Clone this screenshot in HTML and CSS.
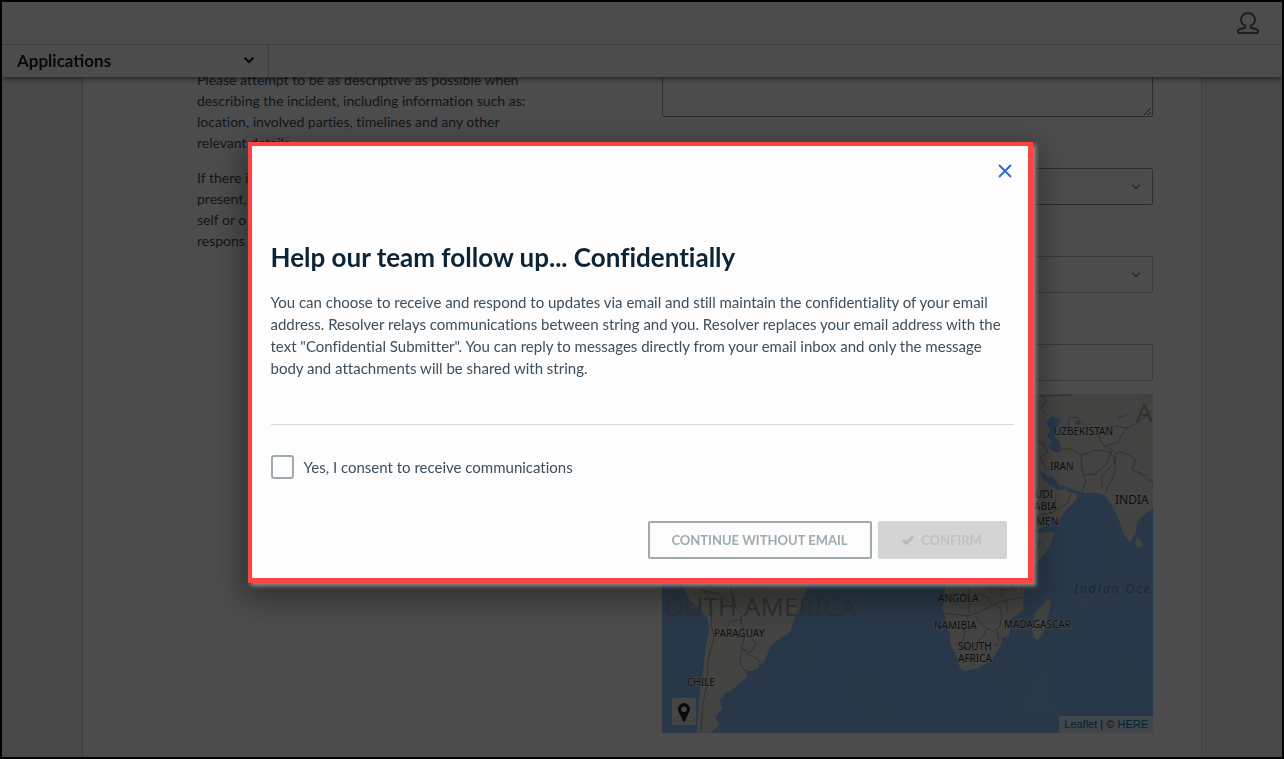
FILE: index.html
```
<!DOCTYPE html>
<html lang="en">

<head>
    <meta charset="UTF-8">
    <meta name="viewport" content="width=device-width, initial-scale=1.0">
    <title>Applications</title>
    <link rel="stylesheet" href="styles.css">
</head>

<body>
    <header class="header">
        <div class="top-bar">
            <button type="button" class="user-btn" aria-label="Account">
                <svg width="22" height="22" viewBox="0 0 22 22" fill="none" stroke="#5b6b7a" stroke-width="2" stroke-linejoin="round">
                    <path d="M8.500 14C5 12 4 9.800 4 7.500a7 6.500 0 0 1 14 0c0 2.300-1 4.500-4.500 6.500v1.500l6.500 2c.8.300 1 .8 1 1.500v2H1v-2c0-.7.200-1.200 1-1.500l6.500-2z" />
                </svg>
            </button>
        </div>
        <nav class="nav-bar">
            <button type="button" class="app-menu">
                <span>Applications</span>
                <svg width="12" height="8" viewBox="0 0 12 8" fill="none" stroke="#0d2436" stroke-width="2">
                    <path d="M1.500 1.500L6 6l4.500-4.500" />
                </svg>
            </button>
        </nav>
    </header>

    <main class="page">
        <div class="panel">
            <div class="help-text">
                <p>Please attempt to be as descriptive as possible when<br>
                    describing the incident, including information such as:<br>
                    location, involved parties, timelines and any other<br>
                    relevant details.</p>
                <p>If there i<br>present,<br>self or o<br>respons</p>
            </div>
            <form class="fields">
                <textarea class="field field-area" aria-label="Description"></textarea>
                <div class="select-wrap">
                    <select class="field field-dark" aria-label="Category"></select>
                    <svg width="8" height="6" viewBox="0 0 8 6" fill="none" stroke="#707a82" stroke-width="1.500">
                        <path d="M.5 1L4 4.500 7.500 1" />
                    </svg>
                </div>
                <div class="select-wrap">
                    <select class="field" aria-label="Type"></select>
                    <svg width="8" height="6" viewBox="0 0 8 6" fill="none" stroke="#707a82" stroke-width="1.500">
                        <path d="M.5 1L4 4.500 7.500 1" />
                    </svg>
                </div>
                <div class="location">
                    <input type="text" class="field" aria-label="Location">
                    <div class="map">
                        <svg class="map-svg" viewBox="662 394 491 339" preserveAspectRatio="xMidYMid slice">
                            <rect class="water" x="662" y="394" width="491" height="339" />
                            <!-- sea floor -->
                            <g class="ridge">
                                <path d="M803 653l8-1 4 4-9 3zM857 672l4 14 5 18 12 20 6-4-11-16-8-26z" />
                                <path d="M1015 712l12-18 16-32 5-30 4 2-5 34 10 44zM1130 660l8 14-4 16 12 12-4 3-14-12 2-18-4-12z" />
                                <path d="M1080 600l14-6-10 18-12 14zM1008 660l3 12-2 16-4-14zM1110 560l8-40 4 2-4 42z" />
                            </g>
                            <!-- south america -->
                            <path class="land" d="M676 570l7 16 6 14 11 8 8 12 1 12-4 18-1 15-4 25-2 25-1 18h14l9-9-5-7 7-8-2-9 7-8 5-2 6-6 9-7-1-5 11-3 8-9 6-15 10-7 9-6 3-10 7-15 6-17 4-10z" />
                            <path class="green" d="M690 586l60 0 20 8-8 16-20-6-10 10-20-12-12 4z" />
                            <path class="border" d="M700 586l8 10 4 14-1 14 3 14-6 22-1 22-4 22-2 24v8M702 590l16 4 16 12 8 8-1 10M727 628l4-7 9-1 3 6v9l8 2 5 7-5 8-10-4 4-12M742 648l-2 14 4 8 8 3 8-5-2-9-12-6-4-6M730 586l6 22 6 6" />
                            <!-- africa -->
                            <path class="land" d="M945 570v30l-3 7 7 21 2 17 5 10 4 13 5 3 13-3 14-8 9-15 1-7 7-2 1-6-3-8 16-12 1-14-2-26z" />
                            <path class="land" d="M1020 533h16l18-1-3 13-10 13-9 9-12 8z" />
                            <path class="green" d="M948 586h52l8 8-16 12-30 4-16-8z" />
                            <path class="border" d="M943 613l24 3 10-3 12-6 8-4 10-3 12-2 6-1M969 586v27M968 616l-3 12-2 14-2 8 14-6 8-8 5-8M975 616l8 10 10 5 7-4 2-14-6-10M997 629l2 12-4 5 4-1M1003 586l-2 10 6 6 0 10M980 594l8 4 3 6" />
                            <path class="land" d="M1048 598l3 4-2 10-5 20-6 8-5-3-1-9 3-16 8-7z" />
                            <path class="green" d="M1047 600l3 3-4 13-4-2z" />
                            <!-- asia -->
                            <path class="land" d="M1020 394h133v114l-6 5-10 9-1 10-6 11-6-8-5-15-5-11-9-13-7-3h-13l-15-4-8-3-10-1-6-10-6-4 3 8 7 7 9 4 6-3 4 5 8 2-1 6-10 10-7 10-17 8-24 8z" />
                            <path class="land" d="M1137 537l4 4 1 5-4 2-3-3z" />
                            <path class="water" d="M1052 416l-6 6 4 7-3 7 5 5-4 6 6 5h7l-1-9-5-6 2-10 4-7zM1046 476l5 9 8 5 10-2-10-3-6-8zM1074 420l6 1v4l-5-1zM1117 417l15-3-14 5z" />
                            <path class="green" d="M1140 394h13v12l-8-2z" />
                            <path class="border" d="M1040 394l6 6-5 8 6 7M1040 396l32-1M1036 440l8 4 4 8-8 5 6 12M1061 449l10 0 10 6 1 14 4 12-4 10M1067 430l2-12 8-1 9 11 13 9 5 9 13-3 9-14 14-8 13-12M1082 455l14-5 15 2-4 12-12 10-12 1M1111 452l4 10-13 13 0 12M1104 445l12 8 8-1 12 8-4 10 16 6 5 8M1116 453l-2 22-9 18M1136 471l10 8 7 4M1056 498l-2 14-16 4M1071 494l-4 10-12 6M1034 544l7-3-4 9M1100 428l14-2 14 2" />
                            <g class="label">
                                <text x="1054" y="435">UZBEKISTAN</text>
                                <text x="1050" y="470">IRAN</text>
                                <text x="1035" y="498">UDI</text>
                                <text x="1034" y="510">ABIA</text>
                                <text x="1036" y="525">MEN</text>
                                <text x="1115" y="504" class="label-md">INDIA</text>
                                <text x="984" y="590" class="label-faint">TANZANIA</text>
                                <text x="938" y="602">ANGOLA</text>
                                <text x="934" y="629">NAMIBIA</text>
                                <text x="1004" y="628">MADAGASCAR</text>
                                <text x="958" y="650">SOUTH</text>
                                <text x="958" y="662">AFRICA</text>
                                <text x="714" y="637">PARAGUAY</text>
                                <text x="687" y="686">CHILE</text>
                            </g>
                            <text x="664" y="616" class="continent">OUTH AMERICA</text>
                            <text x="1136" y="422" class="continent">A</text>
                            <text x="1074" y="593" class="ocean">Indian Oce</text>
                        </svg>
                        <button type="button" class="pin-btn" aria-label="Pick location">
                            <svg width="14" height="20" viewBox="0 0 14 20" fill="#1e2a33" fill-rule="evenodd">
                                <path d="M7 1a6 6 0 0 1 6 6c0 3.500-3 6-4.500 11.500-.4 1.300-2.600 1.300-3 0C4 13 1 10.500 1 7a6 6 0 0 1 6-6zm0 3.500a2.800 2.800 0 1 0 0 5.600 2.800 2.800 0 0 0 0-5.600z" />
                            </svg>
                        </button>
                        <div class="attribution"><a href="#">Leaflet</a> | © <a href="#">HERE</a></div>
                    </div>
                </div>
            </form>
        </div>
    </main>

    <div class="overlay">
        <div class="modal" role="dialog" aria-modal="true" aria-labelledby="modal-title">
            <button type="button" class="close-btn" aria-label="Close">
                <svg width="14" height="14" viewBox="0 0 14 14" fill="none" stroke="#2a6cd0" stroke-width="2">
                    <path d="M1 1l12 12M13 1L1 13" />
                </svg>
            </button>
            <h2 class="modal-title" id="modal-title">Help our team follow up... Confidentially</h2>
            <p class="modal-text">You can choose to receive and respond to updates via email and still maintain the confidentiality of your email<br>
                address. Resolver relays communications between string and you. Resolver replaces your email address with the<br>
                text "Confidential Submitter". You can reply to messages directly from your email inbox and only the message<br>
                body and attachments will be shared with string.</p>
            <label class="consent">
                <input type="checkbox" name="consent">
                <span>Yes, I consent to receive communications</span>
            </label>
            <div class="actions">
                <button type="button" class="btn btn-outline">CONTINUE WITHOUT EMAIL</button>
                <button type="button" class="btn btn-confirm" disabled>
                    <svg width="12" height="10" viewBox="0 0 12 10" fill="none" stroke="#b4bcc1" stroke-width="3">
                        <path d="M1 5l3.500 3.200L11 1.500" />
                    </svg>
                    CONFIRM
                </button>
            </div>
        </div>
    </div>
</body>

</html>
```

FILE: styles.css
```
* {
    margin: 0;
    padding: 0;
    box-sizing: border-box;
}

body {
    height: 100vh;
    overflow: hidden;
    border: 2px solid #000;
    background-color: #f0f0f0;
    font-family: Lato, "Liberation Sans", sans-serif;
    font-size: 14px;
    font-variant-ligatures: none;
    color: #3c4f5e;
}

button {
    font-family: inherit;
    background: none;
    border: none;
    cursor: pointer;
}

/* header */
.header {
    position: fixed;
    top: 2px;
    left: 2px;
    right: 2px;
    z-index: 1;
    background-color: #fff;
    box-shadow: 0 2px 5px rgba(0, 0, 0, .5);
}

.top-bar {
    display: flex;
    justify-content: flex-end;
    align-items: center;
    height: 43px;
    padding-right: 23px;
    border-bottom: 1px solid #d0d0d0;
}

.user-btn svg,
.close-btn svg,
.pin-btn svg {
    display: block;
}

.nav-bar {
    height: 32px;
}

.app-menu {
    display: flex;
    justify-content: space-between;
    align-items: center;
    width: 267px;
    height: 100%;
    padding: 0 13px 2px 15px;
    border-right: 1px solid #d0d0d0;
    font-size: 17px;
    font-weight: 700;
    color: #0d2436;
}

/* form */
.page {
    display: flex;
    justify-content: center;
    height: 100%;
}

.panel {
    display: flex;
    justify-content: space-between;
    width: 1120px;
    padding: 43px 48px 24px 114px;
    background-color: #fff;
    border: 1px solid #d4d4d4;
    border-width: 0 1px;
}

.help-text {
    padding-top: 24px;
    line-height: 21px;
}

.help-text p {
    margin-bottom: 14px;
}

.fields {
    display: flex;
    flex-direction: column;
    gap: 51px;
    width: 491px;
}

.field {
    display: block;
    width: 100%;
    height: 37px;
    background-color: #fff;
    border: 1px solid #c4c4c4;
    border-radius: 2px;
    outline: none;
    appearance: none;
}

.field-area {
    height: 72px;
    border-color: #999;
    resize: vertical;
}

.field-dark {
    border-color: #999;
}

.select-wrap {
    display: grid;
    align-items: center;
}

.select-wrap .field,
.select-wrap svg {
    grid-area: 1 / 1;
}

.select-wrap svg {
    justify-self: end;
    margin-right: 13px;
    pointer-events: none;
}

/* map */
.map {
    position: relative;
    height: 339px;
    margin-top: 13px;
}

.map-svg {
    display: block;
    width: 100%;
    height: 100%;
}

.water {
    fill: #88bcf0;
}

.ridge {
    fill: #8cbff2;
}

.land {
    fill: #e0e1dd;
}

.green {
    fill: #d3e0c8;
}

.border {
    fill: none;
    stroke: #a3a3a3;
}

.label {
    font-family: "Noto Sans", sans-serif;
    font-size: 10px;
    fill: #333;
    stroke: #eee;
    stroke-width: 1px;
    paint-order: stroke;
}

.label-md {
    font-size: 12px;
}

.label-faint {
    fill: #888;
}

.continent {
    font-family: "Noto Sans", sans-serif;
    font-size: 26px;
    fill: #a4a4a4;
}

.ocean {
    font-family: "Noto Sans", sans-serif;
    font-size: 12px;
    font-style: italic;
    letter-spacing: 2px;
    fill: #5485b5;
}

.pin-btn {
    position: absolute;
    left: 10px;
    bottom: 8px;
    padding: 4px 5px 3px;
    background-color: #e8e8e8;
}

.attribution {
    position: absolute;
    right: 0;
    bottom: 0;
    padding: 0 5px;
    background-color: rgba(255, 255, 255, .7);
    font-family: "Liberation Sans", sans-serif;
    font-size: 11px;
    line-height: 17px;
    color: #333;
}

.attribution a {
    color: #0078a8;
    text-decoration: none;
}

/* modal */
.overlay {
    position: fixed;
    inset: 0;
    z-index: 2;
    display: flex;
    justify-content: center;
    align-items: flex-start;
    padding: 142px 4px 0 0;
    background-color: rgba(0, 0, 0, .7);
}

.modal {
    display: flex;
    flex-direction: column;
    width: 785px;
    padding: 18px 14px 19px 19px;
    background-color: #fdfdfd;
    border: 4px solid #ff4343;
    border-right-width: 5px;
    border-bottom-width: 5px;
    box-shadow: 3px 3px 4px rgba(150, 150, 150, .9), 0 10px 30px 6px rgba(0, 0, 0, .4);
}

.close-btn {
    align-self: flex-end;
    margin-right: 2px;
}

.modal-title {
    margin-top: 64px;
    font-size: 26px;
    line-height: 30px;
    color: #0d2436;
}

.modal-text {
    margin-top: 19px;
    padding-bottom: 45px;
    border-bottom: 1px solid #d8dbdd;
    font-size: 15px;
    line-height: 22px;
}

.consent {
    display: flex;
    align-items: center;
    gap: 10px;
    margin-top: 30px;
    font-size: 15px;
}

.consent input {
    width: 23px;
    height: 24px;
    border: 2px solid #9fa9b0;
    border-radius: 3px;
    appearance: none;
}

.actions {
    display: flex;
    justify-content: flex-end;
    gap: 6px;
    margin-top: 42px;
    padding-right: 7px;
}

.btn {
    display: flex;
    justify-content: center;
    align-items: center;
    gap: 7px;
    height: 38px;
    border-radius: 2px;
    font-size: 13px;
    font-weight: 700;
}

.btn-outline {
    width: 224px;
    border: 2px solid #a0aab1;
    color: #a0aab1;
}

.btn-confirm {
    width: 129px;
    background-color: #d4d4d4;
    color: #bcc3c8;
}
```
